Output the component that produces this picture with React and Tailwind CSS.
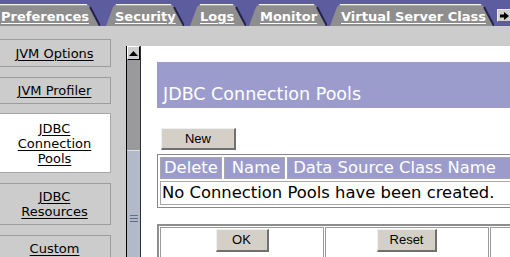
import React from "react";

const tabs = [
  { label: "Preferences", w: 110, cls: "w-[110px] -ml-[10px]", pl: "pl-[11px]" },
  { label: "Security", w: 78, cls: "w-[78px] ml-[6px]", pl: "pl-[9px]" },
  { label: "Logs", w: 56, cls: "w-[56px] ml-[6px]", pl: "pl-[10px]" },
  { label: "Monitor", w: 78, cls: "w-[78px] ml-[3px]", pl: "pl-[11px]" },
  { label: "Virtual Server Class", w: 164, cls: "w-[164px] ml-[3px]", pl: "pl-[11px]" },
];

const navItems = [
  { label: ["JVM Options"], cls: "h-[28px]" },
  { label: ["JVM Profiler"], cls: "h-[27px] mt-[10px]" },
  { label: ["JDBC", "Connection", "Pools"], cls: "h-[60px] mt-[9px]", active: true },
  { label: ["JDBC", "Resources"], cls: "h-[42px] mt-[10px]" },
  { label: ["Custom", "Resources"], cls: "h-[42px] mt-[10px]" },
];

const headers = [
  { label: "Delete", cls: "pl-[3px] pr-[3px]" },
  { label: "Name", cls: "pl-[7px] pr-[4px]" },
  { label: "Data Source Class Name", cls: "pl-[5px] pr-[60px]" },
];

const Tab = ({ label, w, cls, pl }) => (
  <div className={`relative h-[22px] shrink-0 ${cls}`}>
    <svg width={w} height="22" className="absolute inset-0">
      <polygon points={`0,22 7,3 10,0 ${w - 13},0 ${w - 10},3 ${w},22`} fill="#8e8e8e" />
      <line x1="10" y1="0.5" x2={w - 13} y2="0.5" stroke="#f2f2f2" strokeWidth="1.5" />
      <line x1={w - 10} y1="3" x2={w} y2="22" stroke="#24244a" strokeWidth="2" />
    </svg>
    <span
      className={`relative block ${pl} pt-[5px] text-[13px] leading-[15px] font-bold text-white underline underline-offset-2 whitespace-nowrap`}
    >
      {label}
    </span>
  </div>
);

const WinButton = ({ children, className = "" }) => (
  <button
    className={`bg-[#d4d0c8] border border-t-[#f0f0f0] border-l-[#f0f0f0] border-r-2 border-b-2 border-r-[#707070] border-b-[#707070] text-[13px] leading-[16px] text-black font-['Liberation_Sans',Arial,sans-serif] ${className}`}
  >
    {children}
  </button>
);

export default function App() {
  return (
    <div className="w-[510px] h-[257px] overflow-hidden bg-[#cccccc] font-['DejaVu_Sans',Verdana,sans-serif]">
      {/* tab bar */}
      <div className="h-[26px] bg-[#5c5c9e] flex items-end overflow-hidden">
        {tabs.map((t) => (
          <Tab key={t.label} {...t} />
        ))}
        <div className="ml-[3px] mb-[4px] w-[14px] h-[13px] shrink-0 bg-[#d0d0d0] border border-[#eeeeee] border-r-[#606060] border-b-[#606060] flex items-center justify-center">
          <svg width="9" height="8" viewBox="0 0 9 8">
            <polygon points="0,2.5 4,2.5 4,0 9,4 4,8 4,5.5 0,5.5" fill="#000" />
          </svg>
        </div>
      </div>

      <div className="flex h-[231px]">
        {/* left nav */}
        <div className="w-[126px] shrink-0 pt-[13px] overflow-hidden">
          {navItems.map((n, i) => (
            <div
              key={i}
              className={`-ml-[2px] w-[113px] border flex flex-col items-center justify-center text-[13px] leading-[15px] text-black ${
                n.active ? "bg-white border-[#a8a8a8]" : "border-[#9c9c9c]"
              } ${n.cls}`}
            >
              {n.label.map((l) => (
                <span key={l} className="underline underline-offset-2">
                  {l}
                </span>
              ))}
            </div>
          ))}
        </div>

        {/* right frame */}
        <div className="flex-1 flex flex-col">
          <div className="h-[20px] shrink-0" />
          <div className="flex flex-1 min-h-0">
            {/* scrollbar */}
            <div className="w-[15px] shrink-0 flex flex-col border-l border-black border-r border-r-[#303030]">
              <div className="h-[14px] shrink-0 bg-[#cfcfcf] border border-t-white border-l-white border-r-black border-b-black flex items-center justify-center">
                <svg width="9" height="5" viewBox="0 0 9 5">
                  <polygon points="0,5 4.5,0 9,5" fill="#000" />
                </svg>
              </div>
              <div className="h-[90px] shrink-0 bg-[#9a9a9c]" />
              <div className="flex-1 bg-[#b2bac8] border-t border-[#dde2ea] flex flex-col items-center pt-[64px] gap-[2px]">
                <div className="w-[8px] h-px bg-[#5e6e82]" />
                <div className="w-[8px] h-px bg-[#5e6e82]" />
                <div className="w-[8px] h-px bg-[#5e6e82]" />
              </div>
            </div>

            {/* content */}
            <div className="flex-1 bg-white pl-4 pt-4 overflow-hidden">
              <div className="h-[46px] bg-[#9c9ccc] flex items-end pl-[6px] pb-[1px] text-white text-[17.5px] whitespace-nowrap">
                JDBC Connection Pools
              </div>

              <WinButton className="mt-5 ml-1 w-[75px] h-[22px] block">New</WinButton>

              <table className="mt-[4px] border border-[#888888] border-separate border-spacing-[2px] text-[16.4px] leading-[20px] whitespace-nowrap">
                <thead>
                  <tr>
                    {headers.map((h) => (
                      <th
                        key={h.label}
                        className={`bg-[#9c9ccc] border border-[#a8a8a8] font-normal text-white text-left ${h.cls}`}
                      >
                        {h.label}
                      </th>
                    ))}
                  </tr>
                </thead>
                <tbody>
                  <tr>
                    <td colSpan={3} className="border border-[#a8a8a8] px-[1px] h-[24px] text-black">
                      No Connection Pools have been created.
                    </td>
                  </tr>
                </tbody>
              </table>

              <table className="mt-[16px] w-[500px] table-fixed border-2 border-[#8e8e8e] border-separate border-spacing-[1px]">
                <tbody>
                  <tr>
                    {["OK", "Reset", ""].map((b, i) => (
                      <td key={i} className="border border-[#9a9a9a] h-[34px] align-top pt-[1px]">
                        {b && (
                          <WinButton
                            className={`block mx-auto h-[23px] ${b === "OK" ? "w-[53px]" : "w-[60px]"}`}
                          >
                            {b}
                          </WinButton>
                        )}
                      </td>
                    ))}
                  </tr>
                </tbody>
              </table>
            </div>
          </div>
        </div>
      </div>
    </div>
  );
}
